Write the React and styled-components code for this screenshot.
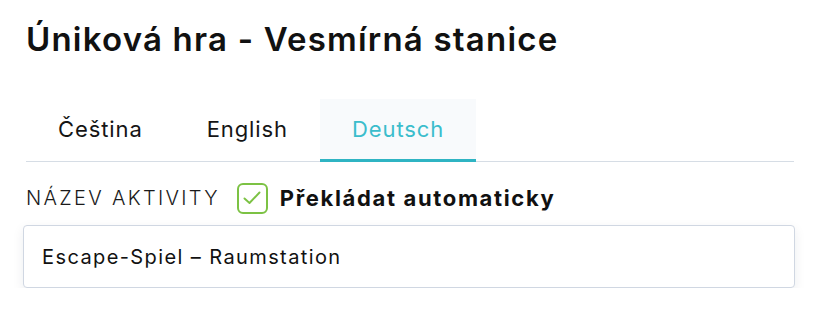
import styled, { createGlobalStyle } from "styled-components";
import { useState } from "react";

const GlobalStyle = createGlobalStyle`
  body {
    margin: 0;
    background: #ffffff;
    font-family: "Inter", "Noto Sans", sans-serif;
    color: #111111;
  }
`;

const Page = styled.div`
  width: 768px;
  padding: 18px 0 0 26px;
`;

const Title = styled.h1`
  margin: 0;
  font-size: 33px;
  font-weight: 600;
  line-height: 42px;
  letter-spacing: 1.2px;
`;

const Tabs = styled.div`
  display: flex;
  margin-top: 39px;
  border-bottom: 1px solid #d6dde5;
`;

const Tab = styled.button`
  border: 0;
  background: ${(p) => (p.active ? "#f8fafc" : "transparent")};
  border-bottom: 3px solid ${(p) => (p.active ? "#2fb4c3" : "transparent")};
  margin-bottom: -1px;
  padding: 0 32px;
  height: 63px;
  font-family: inherit;
  font-size: 22px;
  font-weight: 400;
  letter-spacing: 0.9px;
  color: ${(p) => (p.active ? "#3bbdcc" : "#151515")};
  cursor: pointer;
`;

const LabelRow = styled.div`
  display: flex;
  align-items: center;
  gap: 17px;
  margin-top: 20px;
  height: 32px;
`;

const Label = styled.span`
  font-size: 20px;
  font-weight: 300;
  letter-spacing: 2.3px;
  text-transform: uppercase;
  color: #1a1a1a;
`;

const Check = styled.label`
  display: flex;
  align-items: center;
  gap: 12px;
  cursor: pointer;
  font-size: 22px;
  font-weight: 700;
  letter-spacing: 1.65px;
`;

const Box = styled.span`
  display: flex;
  align-items: center;
  justify-content: center;
  box-sizing: content-box;
  width: 27px;
  height: 27px;
  border: 2px solid #7cc244;
  border-radius: 6px;
`;

const Input = styled.input`
  display: block;
  box-sizing: border-box;
  width: 772px;
  height: 63px;
  margin: 11px 0 0 -3px;
  padding: 0 18px;
  border: 1px solid #d0d7e2;
  border-radius: 4px;
  box-shadow: 0 4px 12px rgba(30, 40, 60, 0.08);
  font-family: inherit;
  font-size: 20px;
  letter-spacing: 1.4px;
  color: #111111;
  outline: none;
`;

export default function App() {
  const [tab, setTab] = useState("de");
  const [auto, setAuto] = useState(true);
  const tabs = [
    ["cs", "Čeština"],
    ["en", "English"],
    ["de", "Deutsch"],
  ];
  return (
    <>
      <GlobalStyle />
      <Page>
        <Title>Úniková hra - Vesmírná stanice</Title>
        <Tabs>
          {tabs.map(([id, name]) => (
            <Tab key={id} active={tab === id} onClick={() => setTab(id)}>
              {name}
            </Tab>
          ))}
        </Tabs>
        <LabelRow>
          <Label>Název aktivity</Label>
          <Check onClick={() => setAuto((v) => !v)}>
            <Box>
              {auto && (
                <svg width="18" height="14" viewBox="0 0 18 14" fill="none">
                  <path d="M1.5 7.5 L6.5 12 L16.5 1.5" stroke="#7cc244" strokeWidth="1.9" strokeLinecap="round" strokeLinejoin="round" />
                </svg>
              )}
            </Box>
            Překládat automaticky
          </Check>
        </LabelRow>
        <Input defaultValue="Escape-Spiel – Raumstation" />
      </Page>
    </>
  );
}
